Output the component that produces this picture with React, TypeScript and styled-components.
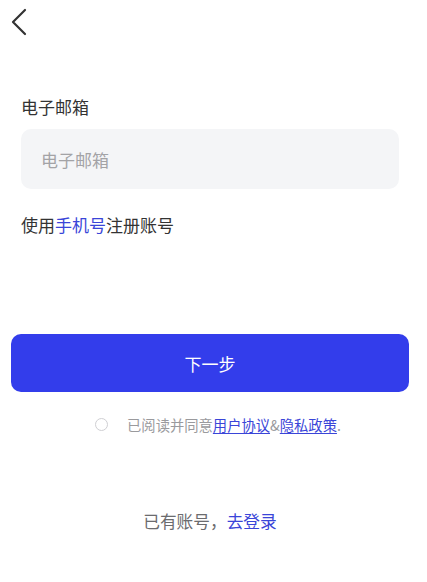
import React from "react";
import styled, { createGlobalStyle } from "styled-components";

const Global = createGlobalStyle`
  html, body { margin: 0; padding: 0; background: #ffffff; }
  body { font-family: "Noto Sans CJK SC", "Noto Sans", sans-serif; }
  * { box-sizing: border-box; }
`;

const Page = styled.div`
  width: 427px;
  min-height: 582px;
  display: flex;
  flex-direction: column;
  background: #fff;
`;

const Header = styled.div`
  height: 44px;
  display: flex;
  align-items: flex-start;
  padding: 8px 0 0 11px;
`;

const BackButton = styled.button`
  border: none;
  background: none;
  padding: 0;
  width: 18px;
  height: 28px;
  cursor: pointer;
  display: flex;
`;

const Form = styled.div`
  display: flex;
  flex-direction: column;
  padding-left: 21px;
  width: 399px;
`;

const Label = styled.div`
  margin-top: 51px;
  font-size: 17px;
  line-height: 24px;
  color: #333;
`;

const Input = styled.input`
  margin-top: 10px;
  height: 60px;
  width: 378px;
  border: none;
  outline: none;
  border-radius: 10px;
  background: #f4f5f7;
  padding: 0 20px;
  font-family: inherit;
  font-size: 17px;
  color: #333;
  &::placeholder { color: #a3a3a6; }
`;

const SwitchLine = styled.div`
  margin-top: 24px;
  font-size: 17px;
  line-height: 24px;
  color: #333;
`;

const Blue = styled.span<{ $underline?: boolean }>`
  color: #3a45d8;
  text-decoration: ${(p) => (p.$underline ? "underline" : "none")};
  text-underline-offset: 2px;
`;

const NextButton = styled.button`
  margin: 97px 0 0 11px;
  width: 398px;
  height: 58px;
  border: none;
  border-radius: 10px;
  background: #333deb;
  color: #fff;
  font-family: inherit;
  font-size: 17px;
  cursor: pointer;
`;

const Agree = styled.div`
  margin-top: 20px;
  display: flex;
  align-items: center;
  justify-content: center;
  padding-left: 9px;
  height: 24px;
  font-size: 14.3px;
  color: #9a9a9d;
`;

const Radio = styled.span`
  width: 13px;
  height: 13px;
  border-radius: 50%;
  border: 1px solid #cfcfd3;
  margin-right: 19px;
  flex-shrink: 0;
`;

const Footer = styled.div`
  margin-top: 73px;
  padding-right: 7px;
  text-align: center;
  font-size: 16.7px;
  line-height: 24px;
  color: #6b6b6e;
`;

export default function App() {
  return (
    <Page>
      <Global />
      <Header>
        <BackButton aria-label="back">
          <svg width="18" height="28" viewBox="0 0 18 28" fill="none">
            <path d="M14 2 L2 14 L14 26" stroke="#333" strokeWidth="2.2" strokeLinecap="round" strokeLinejoin="round" />
          </svg>
        </BackButton>
      </Header>
      <Form>
        <Label>电子邮箱</Label>
        <Input placeholder="电子邮箱" />
        <SwitchLine>
          使用<Blue>手机号</Blue>注册账号
        </SwitchLine>
      </Form>
      <NextButton>下一步</NextButton>
      <Agree>
        <Radio />
        <span>
          已阅读并同意<Blue $underline>用户协议</Blue>&amp;<Blue $underline>隐私政策</Blue>.
        </span>
      </Agree>
      <Footer>
        已有账号，<Blue>去登录</Blue>
      </Footer>
    </Page>
  );
}
